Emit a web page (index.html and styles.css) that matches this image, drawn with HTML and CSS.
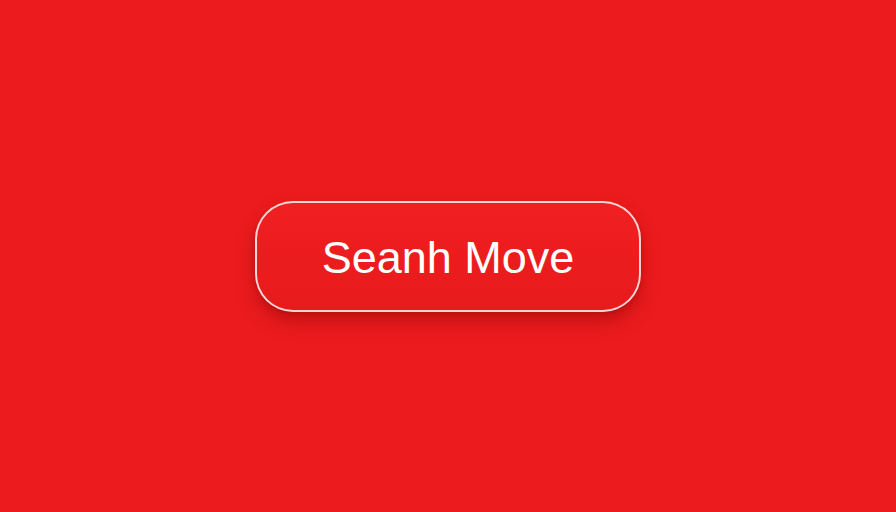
FILE: index.html
```html
<!DOCTYPE html>
<html>
<head>
<meta charset="utf-8">
<link rel="stylesheet" href="styles.css">
</head>
<body>
<main class="stage">
  <button class="cta">Seanh Move</button>
</main>
</body>
</html>
```
FILE: styles.css
```css
html, body {
  margin: 0;
  padding: 0;
  height: 100%;
}
body {
  background: #ec1b1d;
}
.stage {
  height: 100vh;
  display: flex;
  align-items: center;
  justify-content: center;
}
.cta {
  width: 386px;
  height: 111px;
  box-sizing: border-box;
  border: 2px solid rgba(255, 228, 228, 0.92);
  border-radius: 38px;
  background: linear-gradient(180deg, #f11f21 0%, #e71a1c 100%);
  color: #ffffff;
  font-family: "Liberation Sans", Arial, sans-serif;
  font-size: 45px;
  font-weight: 400;
  padding: 4px 0 0 0;
  box-shadow: 0 10px 18px rgba(120, 0, 0, 0.35), 0 2px 4px rgba(120, 0, 0, 0.2);
}
```
